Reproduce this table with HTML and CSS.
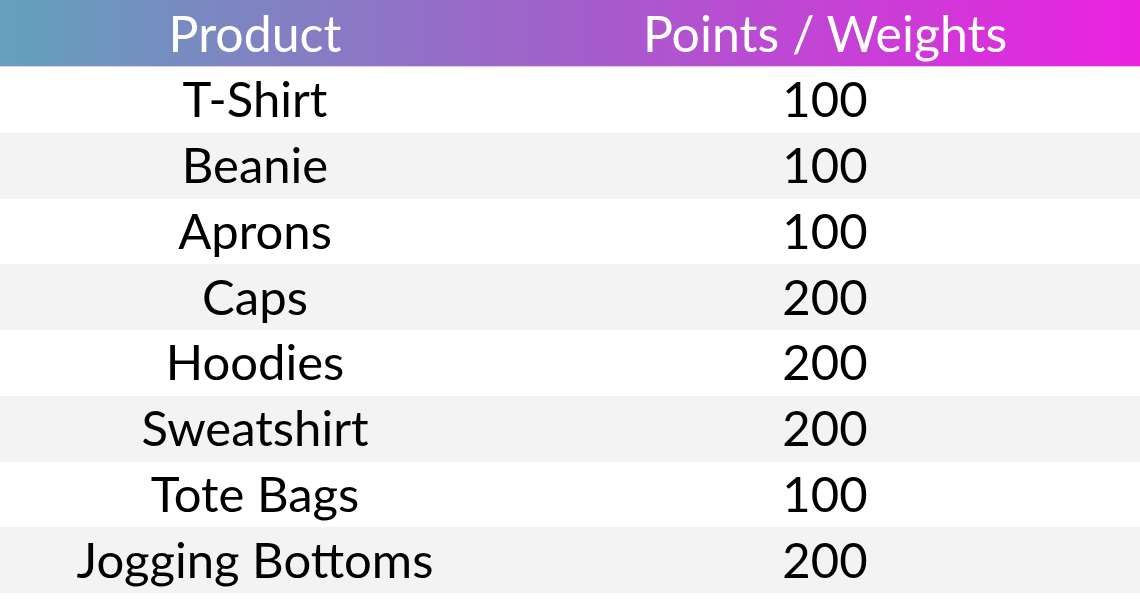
FILE: index.html
```html
<!DOCTYPE html>
<html>
<head>
<meta charset="utf-8">
<link rel="stylesheet" href="styles.css">
</head>
<body>
<div class="table">
  <div class="row head">
    <div class="cell c1">Product</div>
    <div class="cell c2">Points / Weights</div>
  </div>
  <div class="row"><div class="cell c1">T-Shirt</div><div class="cell c2">100</div></div>
  <div class="row alt"><div class="cell c1">Beanie</div><div class="cell c2">100</div></div>
  <div class="row"><div class="cell c1">Aprons</div><div class="cell c2">100</div></div>
  <div class="row alt"><div class="cell c1">Caps</div><div class="cell c2">200</div></div>
  <div class="row"><div class="cell c1">Hoodies</div><div class="cell c2">200</div></div>
  <div class="row alt"><div class="cell c1">Sweatshirt</div><div class="cell c2">200</div></div>
  <div class="row"><div class="cell c1">Tote Bags</div><div class="cell c2">100</div></div>
  <div class="row alt"><div class="cell c1">Jogging Bottoms</div><div class="cell c2">200</div></div>
</div>
</body>
</html>
```
FILE: styles.css
```css
html, body {
  margin: 0;
  padding: 0;
  background: #ffffff;
}
body {
  width: 1140px;
  height: 606px;
  overflow: hidden;
  font-family: Lato, "Open Sans", sans-serif;
  color: #000;
}
.table {
  display: flex;
  flex-direction: column;
}
.row {
  display: grid;
  grid-template-columns: 510px 630px;
  height: 65.75px;
  align-items: center;
  font-size: 49px;
}
.row.head {
  border-bottom: 1px solid #e8c8f0;
  box-sizing: border-box;
  height: 67px;
  background: linear-gradient(90deg, #63a1bc 0%, #a35fcb 50%, #ea22e0 100%);
  color: #ffffff;
  font-size: 50px;
}
.row.alt {
  background: #f3f3f3;
}
.cell {
  text-align: center;
  line-height: 1;
  padding-bottom: 2px;
}
.head .cell {
  padding-bottom: 0;
}
```
